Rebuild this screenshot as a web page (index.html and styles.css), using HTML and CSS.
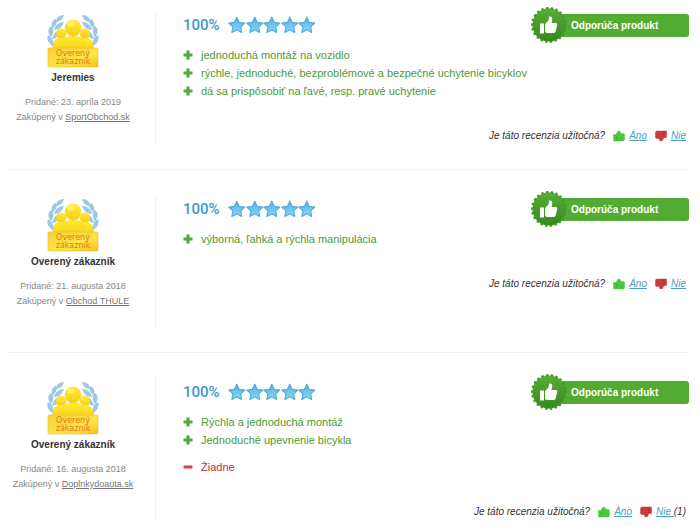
FILE: index.html
```
<!DOCTYPE html>
<html lang="sk">
	<head>
		<meta charset="UTF-8">
		<title>Recenzie</title>
		<link rel="stylesheet" href="styles.css">
	</head>
	<body>
		<svg class="icons" aria-hidden="true">
			<defs>
				<linearGradient id="gold" x1="0" y1="0" x2="0" y2="1">
					<stop offset="0" stop-color="#ffec2c"/>
					<stop offset="1" stop-color="#f8cc18"/>
				</linearGradient>
				<linearGradient id="plate" x1="0" y1="0" x2="1" y2="1">
					<stop offset="0" stop-color="#f9cf35"/>
					<stop offset="0.6" stop-color="#fde545"/>
					<stop offset="1" stop-color="#f5c01c"/>
				</linearGradient>
				<linearGradient id="blue" x1="0" y1="0" x2="0" y2="1">
					<stop offset="0" stop-color="#4fb0e2"/>
					<stop offset="1" stop-color="#86dcfa"/>
				</linearGradient>
				<linearGradient id="seal" x1="0" y1="0" x2="0" y2="1">
					<stop offset="0" stop-color="#58ae38"/>
					<stop offset="1" stop-color="#35871c"/>
				</linearGradient>
				<g id="leaves">
					<path d="M14 3C8 9 3 17 4 26C5 33 8 38 12 42" fill="none" stroke="#a9cfe8" stroke-width="1"/>
					<path d="M17 1C12 1 9 4 9 8C13 8 16 5 17 1Z"/>
					<path d="M9 5C5 6 4 10 5 14C9 12 10 9 9 5Z"/>
					<path d="M17 8C12 8 8 11 7 16C12 16 15 13 17 8Z"/>
					<path d="M4 12C0 15 1 20 4 23C7 19 7 15 4 12Z"/>
					<path d="M14 16C9 16 6 20 5 25C10 24 13 21 14 16Z"/>
					<path d="M1 21C-1 25 2 30 6 32C7 27 5 23 1 21Z"/>
					<path d="M14 25C9 25 7 28 6 33C11 32 13 29 14 25Z"/>
				</g>
				<symbol id="verified" viewBox="0 0 52 54">
					<use href="#leaves" fill="#9cc8e4"/>
					<use href="#leaves" fill="#9cc8e4" transform="matrix(-1 0 0 1 52 0)"/>
					<g fill="url(#gold)" stroke="#f5cf35" stroke-width="0.5">
						<circle cx="14" cy="20" r="5"/>
						<circle cx="38" cy="20" r="5"/>
						<path d="M6 38V32C6 27 9 24 14 24H38C43 24 46 27 46 32V38Z"/>
						<path d="M14 38C14 27 17 22 26 22C35 22 38 27 38 38Z"/>
						<circle cx="26" cy="14" r="8"/>
					</g>
					<ellipse cx="24" cy="10" rx="4" ry="3" fill="#fff688" opacity="0.6"/>
					<rect x="1" y="34" width="50" height="19" rx="1" fill="url(#plate)" stroke="#f0bd32" stroke-width="0.6"/>
					<text x="26" y="42" class="plate">Overený</text>
					<text x="26" y="50" class="plate">zákazník</text>
				</symbol>
				<symbol id="star" viewBox="0 0 18 18">
					<path d="M9 1L11.4 6.3L17.2 7L12.9 10.9L14 16.6L9 13.8L4 16.6L5.1 10.9L0.8 7L6.6 6.3Z" fill="url(#blue)" stroke="#58a8d8" stroke-width="1.2" stroke-linejoin="round"/>
				</symbol>
				<symbol id="plus" viewBox="0 0 10 10">
					<path d="M3.4 0.5H6.6V3.4H9.5V6.6H6.6V9.5H3.4V6.6H0.5V3.4H3.4Z" fill="#55a83a"/>
				</symbol>
				<symbol id="minus" viewBox="0 0 10 10">
					<rect x="0.5" y="3.5" width="9" height="3" rx="1" fill="#d8404e"/>
				</symbol>
				<symbol id="thumb" viewBox="0 0 12 12">
					<path d="M0.5 4.5H3L4.8 1.2Q7.6 0.6 7.6 2.6V3.6H10.5Q11.5 3.6 11.5 5V9.5Q11.5 11 10 11H0.5Z" fill="currentColor" stroke="currentColor" stroke-width="0.5"/>
					<path d="M3.4 5.5V10.5" stroke="#000" stroke-opacity="0.2" stroke-width="0.7"/>
				</symbol>
				<symbol id="recommend" viewBox="0 0 38 38">
					<circle cx="19" cy="19" r="16.6" fill="url(#seal)"/>
					<circle cx="19" cy="19" r="16.8" fill="none" stroke="#439a27" stroke-width="2.6" stroke-linecap="round" stroke-dasharray="0.2 4.598"/>
					<rect x="10" y="17.5" width="4" height="10" fill="#fff"/>
					<path d="M15 18L18.5 14.5L19.2 10.5Q22.6 10 22.2 13.5L21.5 17H26Q27.8 17.4 27.2 19.5L25.6 25.5Q25 27 23.5 27H17L15 26Z" fill="#fff"/>
				</symbol>
			</defs>
		</svg>

		<div class="review">
			<div class="author">
				<svg class="verified"><use href="#verified"/></svg>
				<strong class="name">Jeremies</strong>
				<p class="info">Pridané: 23. apríla 2019<br>Zakúpený v <a href="#">SportObchod.sk</a></p>
			</div>
			<div class="text">
				<div class="head">
					<span class="percent">100%</span>
					<span class="stars">
						<svg><use href="#star"/></svg><svg><use href="#star"/></svg><svg><use href="#star"/></svg><svg><use href="#star"/></svg><svg><use href="#star"/></svg>
					</span>
					<div class="recommend"><svg><use href="#recommend"/></svg><span>Odporúča produkt</span></div>
				</div>
				<ul class="plus">
					<li><svg><use href="#plus"/></svg>jednoduchá montáž na vozidlo</li>
					<li><svg><use href="#plus"/></svg>rýchle, jednoduché, bezproblémové a bezpečné uchytenie bicyklov</li>
					<li><svg><use href="#plus"/></svg>dá sa prispôsobiť na ľavé, resp. pravé uchytenie</li>
				</ul>
				<div class="vote">
					<span>Je táto recenzia užitočná?</span>
					<span class="yes"><svg><use href="#thumb"/></svg><a href="#">Áno</a></span>
					<span class="no"><svg><use href="#thumb"/></svg><a href="#">Nie</a></span>
				</div>
			</div>
		</div>

		<div class="review">
			<div class="author">
				<svg class="verified"><use href="#verified"/></svg>
				<strong class="name">Overený zákazník</strong>
				<p class="info">Pridané: 21. augusta 2018<br>Zakúpený v <a href="#">Obchod THULE</a></p>
			</div>
			<div class="text">
				<div class="head">
					<span class="percent">100%</span>
					<span class="stars">
						<svg><use href="#star"/></svg><svg><use href="#star"/></svg><svg><use href="#star"/></svg><svg><use href="#star"/></svg><svg><use href="#star"/></svg>
					</span>
					<div class="recommend"><svg><use href="#recommend"/></svg><span>Odporúča produkt</span></div>
				</div>
				<ul class="plus">
					<li><svg><use href="#plus"/></svg>výborná, ľahká a rýchla manipulácia</li>
				</ul>
				<div class="vote">
					<span>Je táto recenzia užitočná?</span>
					<span class="yes"><svg><use href="#thumb"/></svg><a href="#">Áno</a></span>
					<span class="no"><svg><use href="#thumb"/></svg><a href="#">Nie</a></span>
				</div>
			</div>
		</div>

		<div class="review">
			<div class="author">
				<svg class="verified"><use href="#verified"/></svg>
				<strong class="name">Overený zákazník</strong>
				<p class="info">Pridané: 16. augusta 2018<br>Zakúpený v <a href="#">Doplnkydoauta.sk</a></p>
			</div>
			<div class="text">
				<div class="head">
					<span class="percent">100%</span>
					<span class="stars">
						<svg><use href="#star"/></svg><svg><use href="#star"/></svg><svg><use href="#star"/></svg><svg><use href="#star"/></svg><svg><use href="#star"/></svg>
					</span>
					<div class="recommend"><svg><use href="#recommend"/></svg><span>Odporúča produkt</span></div>
				</div>
				<ul class="plus">
					<li><svg><use href="#plus"/></svg>Rýchla a jednoduchá montáž</li>
					<li><svg><use href="#plus"/></svg>Jednoduché upevnenie bicykla</li>
				</ul>
				<ul class="minus">
					<li><svg><use href="#minus"/></svg>Žiadne</li>
				</ul>
				<div class="vote">
					<span>Je táto recenzia užitočná?</span>
					<span class="yes"><svg><use href="#thumb"/></svg><a href="#">Áno</a></span>
					<span class="no"><svg><use href="#thumb"/></svg><a href="#">Nie </a>(1)</span>
				</div>
			</div>
		</div>
	</body>
</html>
```
FILE: styles.css
```
body {
	margin: 0 11px 0 8px;
	background: #fff;
	color: #333;
	font-family: "Liberation Sans", Arial, sans-serif;
	font-size: 11px;
}
.icons {
	display: block;
	width: 0;
	height: 0;
}
.review {
	display: flex;
	padding: 25px 0;
	border-bottom: 1px solid #f0f0f0;
}
.review:first-of-type {
	padding-top: 11px;
}
.review:last-of-type {
	padding-bottom: 0;
	border-bottom: none;
}
.author {
	box-sizing: border-box;
	width: 148px;
	min-height: 132px;
	padding: 3px 17px 0 0;
	border-right: 1px solid #f0f0f0;
	text-align: center;
	white-space: nowrap;
}
.verified {
	display: block;
	width: 52px;
	height: 54px;
	margin: 0 auto;
}
.plate {
	fill: #dd7a1c;
	font-family: "DejaVu Sans", sans-serif;
	font-size: 8px;
	text-anchor: middle;
}
.name {
	display: block;
	font-size: 10px;
	line-height: 20px;
}
.info {
	margin: 7px 0 0;
	color: #888;
	font-size: 9px;
	line-height: 15px;
}
.info a {
	color: #777;
}
.text {
	flex: 1;
	padding-left: 27px;
}
.head {
	display: flex;
	align-items: center;
	height: 28px;
}
.percent {
	width: 45px;
	color: #3d9ac8;
	font-family: Roboto, sans-serif;
	font-size: 15px;
	font-weight: 500;
}
.stars {
	display: flex;
	width: 88px;
}
.stars svg {
	flex: 1;
	min-width: 0;
	height: 18px;
}
.recommend {
	display: flex;
	align-items: center;
	width: 136px;
	height: 23px;
	margin-left: auto;
	border-radius: 3px;
	background: #52ab33;
	color: #fff;
	font-size: 10px;
	font-weight: bold;
}
.recommend svg {
	width: 38px;
	height: 38px;
	margin: 0 3px 0 -23px;
}
ul {
	margin: 7px 0 0;
	padding: 0;
	list-style: none;
	line-height: 18px;
}
ul + ul {
	margin-top: 9px;
}
li {
	display: flex;
	align-items: center;
}
li svg {
	width: 10px;
	height: 10px;
	margin-right: 8px;
}
.plus {
	color: #4c9a34;
}
.minus {
	color: #b53239;
}
.vote {
	display: flex;
	justify-content: flex-end;
	margin-top: 28px;
	padding-right: 3px;
	font-size: 10px;
	font-style: italic;
	line-height: 16px;
}
.vote svg {
	width: 12px;
	height: 12px;
	margin: 0 4px 0 8px;
	vertical-align: middle;
}
.vote a {
	color: #4a9cc9;
}
.yes svg {
	color: #4cc83c;
}
.no svg {
	color: #c93a3a;
	transform: rotate(180deg);
}
```
